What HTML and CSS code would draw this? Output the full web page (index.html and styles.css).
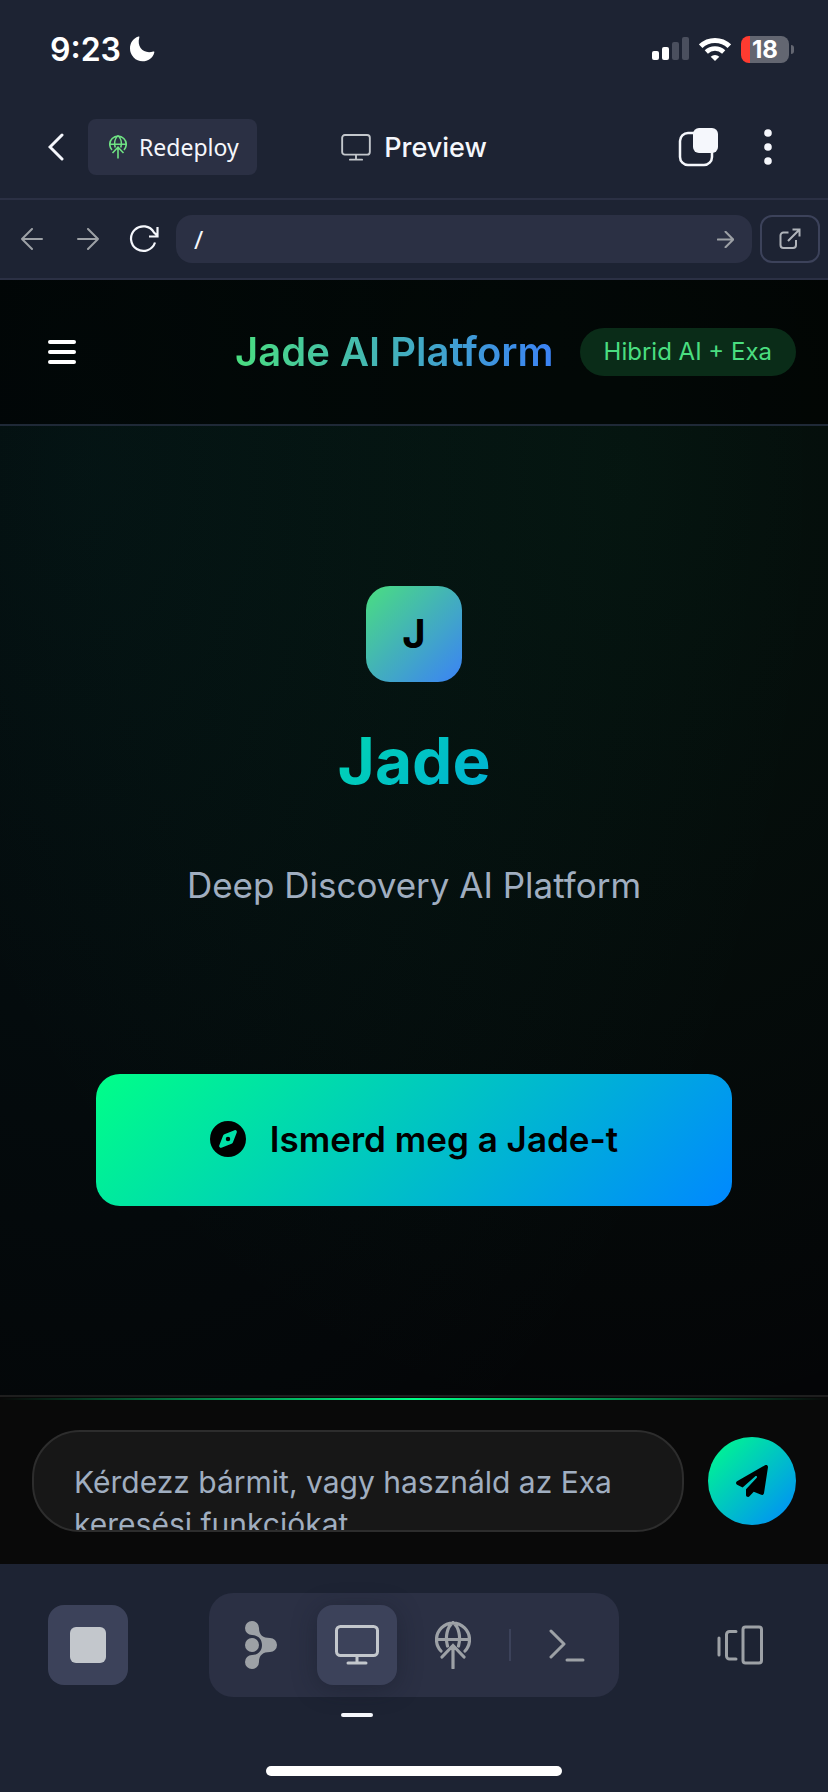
FILE: index.html
```html
<!DOCTYPE html>
<html lang="hu">
<head>
<meta charset="utf-8">
<meta name="viewport" content="width=device-width, initial-scale=1">
<title>Jade AI Platform</title>
<link rel="stylesheet" href="styles.css">
</head>
<body>
<svg class="sprite" aria-hidden="true">
  <symbol id="deploy" viewBox="0 0 36 48" fill="none" stroke="currentColor">
    <path d="M6 30A16.500 16.500 0 1 1 30 30M1.500 18.500h33M12.500 25C10 16 12 6 18 1.500C24 6 26 16 23.500 25M18 47V24.500M7 36L18 24.500L29 36"/>
  </symbol>
  <symbol id="monitor" viewBox="0 0 44 40" fill="none" stroke="currentColor">
    <rect x="1.500" y="1.500" width="41" height="29" rx="4"/><path d="M22 31v7M13 38h18" stroke-linecap="round"/>
  </symbol>
  <symbol id="arrow" viewBox="0 0 22 22" fill="none" stroke="currentColor" stroke-linecap="round" stroke-linejoin="round">
    <path d="M1 11h20M11 1l10 10-10 10"/>
  </symbol>
</svg>

<div class="status">
  <div class="status-group clock">
    <time>9:23</time>
    <svg width="26" height="26" viewBox="0 0 26 26" fill="#fff"><path d="M9.500.5C3.800 2.300 1 7.200 1 12.500A12.700 12.700 0 0 0 13.500 25.200C19 25.200 24 22 25.300 16.400C25.500 15.600 25 15.200 24.200 15.500C15 18.300 7.500 11.500 10.300 1.500C10.600.700 10.200.3 9.500.5Z"/></svg>
  </div>
  <div class="status-group">
    <svg width="37" height="24" viewBox="0 0 37 24" fill="#fff"><rect y="14" width="7" height="9" rx="2"/><rect x="10" y="10" width="7" height="13" rx="2"/><g fill="#4a4f5e"><rect x="20" y="5" width="7" height="18" rx="2"/><rect x="30" width="7" height="23" rx="2"/></g></svg>
    <svg width="32" height="24" viewBox="0 0 32 24" fill="none" stroke="#fff" stroke-width="5"><path d="M1.700 9.200A20.500 20.500 0 0 1 30.300 9.200" stroke-width="5"/><path d="M7.300 15A12.500 12.500 0 0 1 24.700 15" stroke-width="4.600"/><path d="M16 24l-4.300-4.300A6.300 6.300 0 0 1 20.300 19.700Z" fill="#fff" stroke="none"/></svg>
    <div class="battery"><span>18</span></div>
  </div>
</div>

<header class="titlebar">
  <div class="titlebar-start">
    <button class="bare back" aria-label="Back"><svg width="18" height="28" viewBox="0 0 18 28" fill="none" stroke="#f5f7fc" stroke-width="3" stroke-linecap="round"><path d="M14 2L2 14l12 12"/></svg></button>
    <button class="redeploy"><svg width="18" height="24" stroke-width="3.200"><use href="#deploy"/></svg>Redeploy</button>
  </div>
  <h1 class="screen-title"><svg width="30" height="27" stroke-width="2.800"><use href="#monitor"/></svg>Preview</h1>
  <div class="titlebar-end">
    <button class="bare" aria-label="Tabs"><svg width="40" height="40" viewBox="0 0 40 40"><rect x="2" y="6" width="32" height="32" rx="8" fill="none" stroke="#f5f7fc" stroke-width="2.500"/><rect x="15" y="1" width="25" height="25" rx="6" fill="#f5f7fc"/></svg></button>
    <button class="bare" aria-label="Menu"><svg width="8" height="36" viewBox="0 0 8 36" fill="#f5f7fc"><circle cx="4" cy="4" r="3.800"/><circle cx="4" cy="18" r="3.800"/><circle cx="4" cy="32" r="3.800"/></svg></button>
  </div>
</header>

<nav class="browserbar" aria-label="Browser">
  <button class="bare nav-button" aria-label="Previous page"><svg class="flip" width="22" height="22" stroke-width="2"><use href="#arrow"/></svg></button>
  <button class="bare nav-button" aria-label="Next page"><svg width="22" height="22" stroke-width="2"><use href="#arrow"/></svg></button>
  <button class="bare nav-button reload" aria-label="Reload"><svg width="30" height="28" viewBox="0 0 30 28" fill="none" stroke="currentColor" stroke-width="2.200"><path d="M26 17.500A12.300 12.300 0 1 1 25 7.500L28.500 10.700M20 11.500h8.500V2"/></svg></button>
  <form class="address">
    <input type="text" value="/" aria-label="Path">
    <button class="bare" type="button" aria-label="Go"><svg width="17" height="17" stroke-width="2.600"><use href="#arrow"/></svg></button>
  </form>
  <button class="external" aria-label="Open in new tab"><svg width="22" height="22" viewBox="0 0 22 22" fill="none" stroke="currentColor" stroke-width="2"><path d="M9.500 4.500H4.500A3 3 0 0 0 1.500 7.500V17A3 3 0 0 0 4.500 20H14A3 3 0 0 0 17 17V12M9 13L20 2M13.500 1.500H20.500V8.500"/></svg></button>
</nav>

<div class="app">
  <header class="app-header">
    <button class="bare" aria-label="Menü"><svg width="28" height="24" viewBox="0 0 28 24" fill="#fff"><rect width="28" height="4" rx="2"/><rect y="10" width="28" height="4" rx="2"/><rect y="20" width="28" height="4" rx="2"/></svg></button>
    <div class="brand">Jade AI Platform</div>
    <span class="badge">Hibrid AI + Exa</span>
  </header>

  <main class="hero">
    <div class="logo">J</div>
    <h2>Jade</h2>
    <p>Deep Discovery AI Platform</p>
    <button class="cta"><svg width="36" height="36" viewBox="0 0 512 512"><path fill-rule="evenodd" d="M256 512A256 256 0 1 0 256 0a256 256 0 1 0 0 512zm50.700-186.900L162.400 380.600c-19.400 7.500-38.500-11.600-31-31l55.500-144.300c3.300-8.500 9.900-15.100 18.400-18.400l144.300-55.500c19.400-7.500 38.500 11.600 31 31L325.100 306.700c-3.200 8.500-9.900 15.100-18.400 18.400zM288 256a32 32 0 1 0-64 0a32 32 0 1 0 64 0z"/></svg>Ismerd meg a Jade-t</button>
  </main>

  <form class="composer">
    <textarea aria-label="Kérdés" placeholder="Kérdezz bármit, vagy használd az Exa keresési funkciókat"></textarea>
    <button class="send" type="button" aria-label="Küldés"><svg width="32" height="32" viewBox="0 0 512 512"><path d="M498.100 5.600c10.100 7 15.400 19.100 13.500 31.200l-64 416c-1.500 9.700-7.400 18.200-16 23s-18.900 5.400-28 1.600L284 427.700l-68.500 74.100c-8.900 9.700-22.900 12.900-35.200 8.100S160 493.200 160 480V396.400c0-4 1.500-7.800 4.200-10.700L331.800 202.800c5.800-6.300 5.600-16-.4-22s-15.700-6.400-22-.7L106 360.800 17.700 316.600C7.100 311.300.3 300.700 0 288.900s5.900-22.800 16.100-28.700l448-256c10.700-6.100 23.900-5.500 34 1.400z"/></svg></button>
  </form>
</div>

<footer class="dock">
  <div class="dock-row">
    <button class="tool active" aria-label="Stop"><svg width="36" height="36"><rect width="36" height="36" rx="6" fill="#c3c7cc"/></svg></button>
    <div class="tool-group">
      <button class="tool" aria-label="Agent"><svg width="32" height="48" viewBox="0 0 32 48" fill="currentColor"><path d="M7 0A7 7 0 0 1 14 7C14 14 18 17 25 17A7 7 0 0 1 25 31C18 31 14 34 14 41A7 7 0 1 1 7 34C13 34 17 30 17 24S13 14 7 14A7 7 0 0 1 7 0Z"/><circle cx="7" cy="24" r="7"/></svg></button>
      <button class="tool active current" aria-label="Preview"><svg width="44" height="40" stroke-width="3"><use href="#monitor"/></svg></button>
      <button class="tool" aria-label="Deploy"><svg width="36" height="48" stroke-width="3.200" stroke-linecap="round"><use href="#deploy"/></svg></button>
      <span class="divider"></span>
      <button class="tool" aria-label="Console"><svg width="36" height="34" viewBox="0 0 36 34" fill="none" stroke="currentColor" stroke-width="3" stroke-linecap="round" stroke-linejoin="round"><path d="M2 3l13 13L2 29M18 32h16"/></svg></button>
    </div>
    <button class="tool" aria-label="Switch view"><svg width="46" height="40" viewBox="0 0 46 40" fill="none" stroke="currentColor" stroke-width="3"><rect x="26" y="2" width="18.500" height="36" rx="2.500"/><path d="M19 6.500H12.500A3 3 0 0 0 9.500 9.500V31A3 3 0 0 0 12.500 34H19M2 13v17" stroke-linecap="round"/></svg></button>
  </div>
  <div class="indicator"></div>
  <div class="home"></div>
</footer>
</body>
</html>
```
FILE: styles.css
```css
* { box-sizing: border-box; }
body {
  margin: 0;
  min-height: 100vh;
  display: flex;
  flex-direction: column;
  background: #1d2333;
  color: #f5f7fc;
  font-family: Inter, "Liberation Sans", sans-serif;
}
button, input, textarea { font: inherit; color: inherit; }
button { border: 0; padding: 0; display: flex; align-items: center; justify-content: center; }
svg { display: block; flex: none; }
.sprite { position: absolute; width: 0; height: 0; }
.bare { background: none; }

.status { display: flex; justify-content: space-between; align-items: center; height: 98px; padding: 0 34px 0 50px; }
.status-group { display: flex; align-items: center; gap: 10px; }
.clock { gap: 8px; font-size: 32px; font-weight: 600; color: #fff; }
.battery {
  position: relative;
  width: 48px;
  height: 27px;
  margin-right: 5px;
  border-radius: 8px;
  background: linear-gradient(90deg, #ff3b30 9px, #636671 9px);
  color: #fff;
  font-size: 24px;
  font-weight: 700;
  line-height: 27px;
  text-align: center;
}
.battery::after { content: ""; position: absolute; right: -5px; top: 9px; width: 3px; height: 9px; border-radius: 0 4px 4px 0; background: #636671; }

.titlebar {
  display: grid;
  grid-template-columns: 1fr auto 1fr;
  align-items: center;
  height: 102px;
  padding: 0 48px 2px;
  border-bottom: 2px solid #2b3044;
}
.titlebar-start, .titlebar-end { display: flex; align-items: center; }
.titlebar-start { gap: 22px; }
.titlebar-end { justify-content: flex-end; gap: 46px; padding-right: 8px; }
.redeploy {
  height: 56px;
  padding: 0 18px 0 21px;
  gap: 12px;
  border-radius: 8px;
  background: #2b3044;
  font-family: "Noto Sans", sans-serif;
  font-size: 23px;
}
.redeploy svg { color: #6fe283; }
.screen-title { display: flex; align-items: center; gap: 13px; margin: 0; font-size: 27px; font-weight: 500; }
.screen-title svg { color: #c3c7cc; }

.browserbar { display: flex; align-items: center; height: 80px; padding: 0 8px 0 4px; border-bottom: 2px solid #2b3044; color: #9da1a6; }
.nav-button { width: 56px; height: 48px; }
.flip { transform: scaleX(-1); }
.reload { color: #f5f7fc; }
.address { flex: 1; display: flex; align-items: center; height: 48px; margin: 0 8px 0 4px; padding: 0 18px; border-radius: 16px; background: #2b3044; }
.address input { flex: 1; min-width: 0; padding: 0; border: 0; background: none; color: #f5f7fc; font-family: "Noto Sans", sans-serif; font-size: 25px; }
.external { width: 60px; height: 48px; border: 2px solid #3c425a; border-radius: 12px; background: none; color: #b0b4ba; }

.app {
  flex: 1;
  display: flex;
  flex-direction: column;
  background:
    radial-gradient(ellipse 90% 75% at 75% 15%, rgba(20, 200, 100, 0.07), transparent),
    radial-gradient(ellipse 90% 90% at 10% 15%, rgba(0, 200, 200, 0.06), transparent),
    #040507;
}
.app-header { display: flex; align-items: center; height: 146px; padding: 0 32px 0 48px; border-bottom: 2px solid #1f2937; background: rgba(0, 0, 0, 0.6); }
.brand {
  margin: 0 26px 0 auto;
  font-size: 40px;
  line-height: 46px;
  font-weight: 600;
  background: linear-gradient(90deg, #4ade80, #3b82f6);
  -webkit-background-clip: text;
  background-clip: text;
  color: transparent;
}
.badge { padding: 0 24px; border-radius: 24px; background: #0a2c18; color: #4ade80; font-size: 24px; line-height: 48px; }

.hero { flex: 1; display: flex; flex-direction: column; padding: 160px 96px; align-items: stretch; text-align: center; }
.logo { align-self: center; width: 96px; border-radius: 24px; background: linear-gradient(135deg, #4ade80, #3b82f6); color: #000; font-size: 40px; font-weight: 700; line-height: 96px; }
.hero h2 {
  margin: 40px 0 57px;
  font-size: 64px;
  font-weight: 700;
  line-height: 78px;
  background: linear-gradient(135deg, #00ff88, #0088ff);
  -webkit-background-clip: text;
  background-clip: text;
  color: transparent;
}
.hero p { margin: 0 0 161px; color: #a0aec0; font-size: 35px; line-height: 56px; }
.cta { height: 132px; padding-bottom: 2px; gap: 24px; border-radius: 24px; background: linear-gradient(135deg, #00ff88, #0088ff); color: #000; font-size: 35px; font-weight: 600; }

.composer { position: relative; display: flex; align-items: center; gap: 24px; padding: 33px 32px 32px; border-top: 2px solid #1e1e1e; background: #090909; }
.composer::before { content: ""; position: absolute; left: 0; right: 0; top: 1px; height: 2px; background: linear-gradient(90deg, transparent, #00ff88, transparent); }
.composer textarea {
  flex: 1;
  min-width: 0;
  height: 102px;
  padding: 29px 40px 0;
  border: 2px solid #2d2d2d;
  border-radius: 48px;
  background: #171717;
  font-size: 30px;
  line-height: 42px;
  resize: none;
  overflow: hidden;
}
.composer textarea::placeholder { color: #a0aec0; }
.send { width: 88px; height: 88px; border-radius: 50%; background: linear-gradient(135deg, #00ff88, #0088ff); color: #000; }

.dock { display: flex; flex-direction: column; align-items: center; padding: 29px 48px 16px; }
.dock-row { display: flex; align-items: center; justify-content: space-between; align-self: stretch; }
.tool { position: relative; width: 80px; height: 80px; border-radius: 16px; background: none; color: #9da1a6; }
.tool.active { background: #3c425a; color: #c3c7cc; }
.tool.current { box-shadow: 0 4px 24px rgba(20, 24, 38, 0.4); }
.tool-group { display: flex; align-items: center; gap: 16px; padding: 12px; border-radius: 24px; background: #2b3044; }
.divider { width: 2px; height: 32px; background: #3c425a; }
.indicator { width: 32px; height: 4px; margin: 16px 0 49px; border-radius: 2px; background: #f5f7fc; transform: translateX(-57px); }
.home { width: 296px; height: 10px; border-radius: 5px; background: #fff; }
```
